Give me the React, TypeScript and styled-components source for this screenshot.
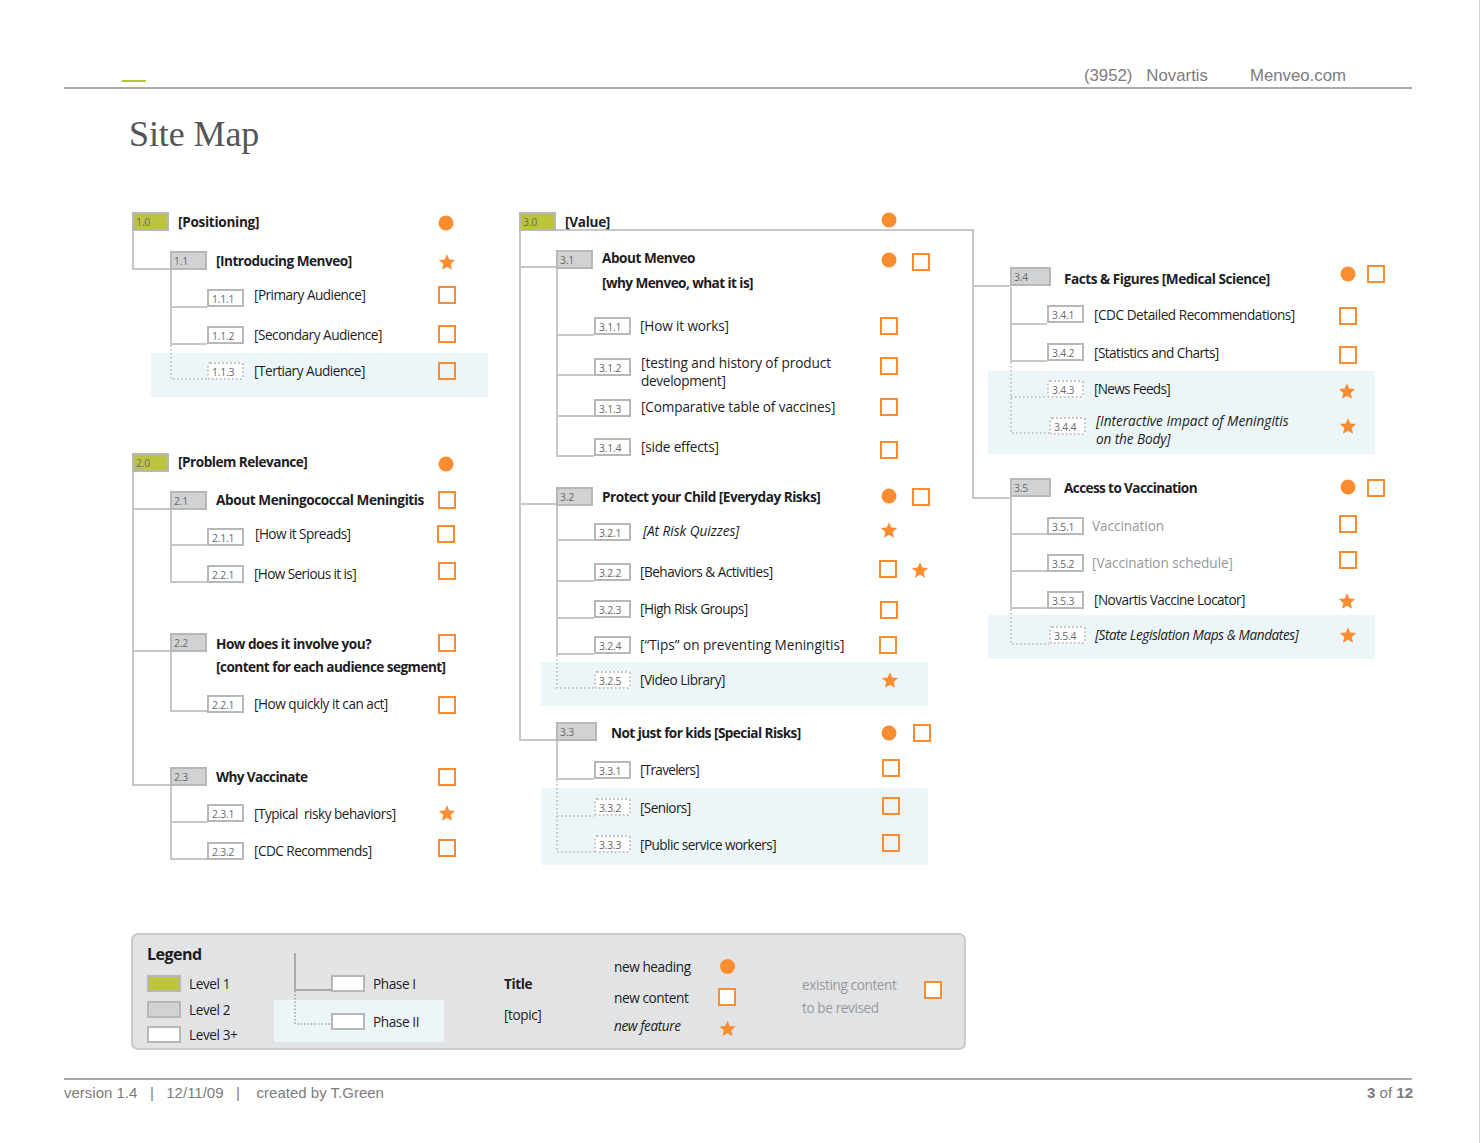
import React from "react";
import styled, { createGlobalStyle } from "styled-components";

const TOP = 200;
const ORANGE = "#fb8d31";
const LINE = "#c6c7c9";
const BODY_FONT = `"Open Sans", "Noto Sans", sans-serif`;

const Global = createGlobalStyle`
  html, body { margin: 0; padding: 0; background: #fff; }
  * { box-sizing: border-box; }
`;

const Page = styled.div`
  position: relative;
  width: 1480px;
  height: 1143px;
  overflow: hidden;
  background: #fff;
  font-family: ${BODY_FONT};
  color: #1d1d1f;
  border-right: 1px solid #d4d4d4;
`;

const TopBar = styled.header`
  display: flex;
  align-items: flex-end;
  height: 89px;
  margin: 0 67px 0 64px;
  border-bottom: 2px solid #a9a9a9;
  font-family: "Liberation Sans", Arial, sans-serif;
  font-size: 16.8px;
  color: #7c7c7e;
`;
const GreenDash = styled.span`
  width: 24px;
  height: 2px;
  margin: 0 0 5px 58px;
  background: #b9c52d;
`;
const TopMeta = styled.div`
  display: flex;
  margin-left: auto;
  padding: 0 66px 1px 0;
  line-height: 20px;
  white-space: pre;
`;
const TopSite = styled.span`
  margin-left: 42px;
`;
const Title = styled.h1`
  margin: 0;
  padding: 23px 0 0 129px;
  height: 111px;
  font: 400 36px/44px "Liberation Serif", "Times New Roman", serif;
  letter-spacing: -0.1px;
  color: #555557;
`;

const Canvas = styled.main`
  position: relative;
  height: 733px;
`;
const Wires = styled.svg`
  position: absolute;
  left: 0;
  top: 0;
  width: 1480px;
  height: 733px;
`;
const Band = styled.div.attrs<{ $x: number; $y: number; $w: number; $h: number }>((p) => ({
  style: { left: p.$x, top: p.$y - TOP, width: p.$w, height: p.$h },
}))<{ $x: number; $y: number; $w: number; $h: number }>`
  position: absolute;
  background: #ecf6f8;
`;

type Lv = 1 | 2 | 3;
const BOX_H: Record<Lv, number> = { 1: 19, 2: 19, 3: 18 };

const NumBox = styled.div.attrs<{ $x: number; $y: number; $lv: Lv; $wide?: boolean }>((p) => ({
  style: {
    left: p.$x,
    top: p.$y - TOP,
    width: p.$wide ? 41 : 37,
    height: BOX_H[p.$lv],
  },
}))<{ $x: number; $y: number; $lv: Lv; $wide?: boolean; $dotted?: boolean }>`
  position: absolute;
  display: flex;
  align-items: center;
  padding: ${(p) => (p.$lv === 3 ? "1px 0 0 3px" : "0 0 0 2px")};
  font-size: 10.4px;
  letter-spacing: -0.2px;
  color: #68686a;
  background: ${(p) => (p.$lv === 1 ? "#bcc43e" : p.$lv === 2 ? "#d1d2d3" : "#fff")};
  border: 2px ${(p) => (p.$dotted ? "dotted" : "solid")} ${(p) => (p.$dotted ? "#c4c5c7" : "#b6b7b9")};
  ${(p) => (p.$dotted ? "border-radius: 3px;" : "")}
`;

const Label = styled.div.attrs<{ $x: number; $y: number; $sp?: number }>((p) => ({
  style: {
    left: p.$x,
    top: p.$y - TOP,
    letterSpacing: p.$sp === undefined ? undefined : `${p.$sp}px`,
  },
}))<{ $x: number; $y: number; $sp?: number; $strong?: boolean; $italic?: boolean; $muted?: boolean }>`
  position: absolute;
  transform: translateY(-50%);
  white-space: pre;
  font-size: 13.6px;
  line-height: 18px;
  letter-spacing: ${(p) => (p.$strong ? "-0.5px" : "-0.48px")};
  font-weight: ${(p) => (p.$strong ? 700 : 400)};
  font-style: ${(p) => (p.$italic ? "italic" : "normal")};
  color: ${(p) => (p.$muted ? "#98999b" : "#1d1d1f")};
`;

const MarkSlot = styled.div.attrs<{ $x: number; $y: number }>((p) => ({
  style: { left: p.$x, top: p.$y - TOP },
}))<{ $x: number; $y: number }>`
  position: absolute;
  display: flex;
  transform: translate(-50%, -50%);
`;
const Square = styled.span`
  display: block;
  width: 18px;
  height: 18px;
  border: 2px solid ${ORANGE};
`;
const WhiteSquare = styled(Square)`
  background: #fff;
`;
const Dot = styled.span`
  display: block;
  width: 15px;
  height: 15px;
  border-radius: 50%;
  background: ${ORANGE};
`;
const StarSvg = styled.svg`
  display: block;
  width: 17px;
  height: 17px;
  fill: ${ORANGE};
`;
const Star = () => (
  <StarSvg viewBox="0 0 24 24">
    <polygon points="12,1 15.2,8.6 23.5,9.3 17.2,14.7 19.1,22.9 12,18.6 4.9,22.9 6.8,14.7 0.5,9.3 8.8,8.6" />
  </StarSvg>
);
type MK = "s" | "d" | "t";
const Mark = ({ k }: { k: MK }) => (k === "s" ? <Square /> : k === "d" ? <Dot /> : <Star />);

type NodeT = { n: string; lv: Lv; x: number; y: number; dotted?: boolean; wide?: boolean };
const nodes: NodeT[] = [
  { n: "1.0", lv: 1, x: 132, y: 212 },
  { n: "1.1", lv: 2, x: 170, y: 251 },
  { n: "1.1.1", lv: 3, x: 207, y: 289 },
  { n: "1.1.2", lv: 3, x: 207, y: 326 },
  { n: "1.1.3", lv: 3, x: 207, y: 362, dotted: true },
  { n: "2.0", lv: 1, x: 132, y: 453 },
  { n: "2.1", lv: 2, x: 170, y: 491 },
  { n: "2.1.1", lv: 3, x: 207, y: 528 },
  { n: "2.2.1", lv: 3, x: 207, y: 565 },
  { n: "2.2", lv: 2, x: 170, y: 633 },
  { n: "2.2.1", lv: 3, x: 207, y: 695 },
  { n: "2.3", lv: 2, x: 170, y: 767 },
  { n: "2.3.1", lv: 3, x: 207, y: 804 },
  { n: "2.3.2", lv: 3, x: 207, y: 842 },
  { n: "3.0", lv: 1, x: 519, y: 212 },
  { n: "3.1", lv: 2, x: 556, y: 250 },
  { n: "3.1.1", lv: 3, x: 594, y: 317 },
  { n: "3.1.2", lv: 3, x: 594, y: 358 },
  { n: "3.1.3", lv: 3, x: 594, y: 399 },
  { n: "3.1.4", lv: 3, x: 594, y: 438 },
  { n: "3.2", lv: 2, x: 556, y: 487 },
  { n: "3.2.1", lv: 3, x: 594, y: 523 },
  { n: "3.2.2", lv: 3, x: 594, y: 563 },
  { n: "3.2.3", lv: 3, x: 594, y: 600 },
  { n: "3.2.4", lv: 3, x: 594, y: 636 },
  { n: "3.2.5", lv: 3, x: 594, y: 671, dotted: true },
  { n: "3.3", lv: 2, x: 556, y: 722, wide: true },
  { n: "3.3.1", lv: 3, x: 594, y: 761 },
  { n: "3.3.2", lv: 3, x: 594, y: 798, dotted: true },
  { n: "3.3.3", lv: 3, x: 594, y: 835, dotted: true },
  { n: "3.4", lv: 2, x: 1010, y: 267, wide: true },
  { n: "3.4.1", lv: 3, x: 1047, y: 305 },
  { n: "3.4.2", lv: 3, x: 1047, y: 343 },
  { n: "3.4.3", lv: 3, x: 1047, y: 380, dotted: true },
  { n: "3.4.4", lv: 3, x: 1049, y: 417, dotted: true },
  { n: "3.5", lv: 2, x: 1010, y: 478, wide: true },
  { n: "3.5.1", lv: 3, x: 1047, y: 517 },
  { n: "3.5.2", lv: 3, x: 1047, y: 554 },
  { n: "3.5.3", lv: 3, x: 1047, y: 591 },
  { n: "3.5.4", lv: 3, x: 1049, y: 626, dotted: true },
];

type Lab = { t: string; x: number; y: number; s?: boolean; i?: boolean; m?: boolean; sp?: number };
const labels: Lab[] = [
  { t: "[Positioning]", x: 178, y: 222, s: true, sp: -0.3 },
  { t: "[Introducing Menveo]", x: 216, y: 261, s: true },
  { t: "[Primary Audience]", x: 254, y: 295, sp: -0.53 },
  { t: "[Secondary Audience]", x: 254, y: 335 },
  { t: "[Tertiary Audience]", x: 254, y: 371 },
  { t: "[Problem Relevance]", x: 178, y: 462, s: true },
  { t: "About Meningococcal Meningitis", x: 216, y: 500, s: true, sp: -0.42 },
  { t: "[How it Spreads]", x: 255, y: 534, sp: -0.55 },
  { t: "[How Serious it is]", x: 254, y: 574, sp: -0.6 },
  { t: "How does it involve you?", x: 216, y: 644, s: true },
  { t: "[content for each audience segment]", x: 216, y: 667, s: true, sp: -0.55 },
  { t: "[How quickly it can act]", x: 254, y: 704 },
  { t: "Why Vaccinate", x: 216, y: 777, s: true, sp: -0.62 },
  { t: "[Typical  risky behaviors]", x: 254, y: 814, sp: -0.5 },
  { t: "[CDC Recommends]", x: 254, y: 851, sp: -0.53 },
  { t: "[Value]", x: 565, y: 222, s: true, sp: -0.3 },
  { t: "About Menveo", x: 602, y: 258, s: true, sp: -0.48 },
  { t: "[why Menveo, what it is]", x: 602, y: 283, s: true, sp: -0.58 },
  { t: "[How it works]", x: 640, y: 326, sp: -0.14 },
  { t: "[testing and history of product", x: 641, y: 363, sp: -0.07 },
  { t: "development]", x: 641, y: 381, sp: -0.3 },
  { t: "[Comparative table of vaccines]", x: 641, y: 407, sp: -0.13 },
  { t: "[side effects]", x: 641, y: 447, sp: -0.2 },
  { t: "Protect your Child [Everyday Risks]", x: 602, y: 497, s: true },
  { t: "[At Risk Quizzes]", x: 643, y: 531, i: true, sp: -0.02 },
  { t: "[Behaviors & Activities]", x: 640, y: 572, sp: -0.5 },
  { t: "[High Risk Groups]", x: 640, y: 609, sp: -0.54 },
  { t: "[“Tips” on preventing Meningitis]", x: 640, y: 645, sp: -0.02 },
  { t: "[Video Library]", x: 640, y: 680, sp: -0.5 },
  { t: "Not just for kids [Special Risks]", x: 611, y: 733, s: true, sp: -0.56 },
  { t: "[Travelers]", x: 640, y: 770, sp: -0.72 },
  { t: "[Seniors]", x: 640, y: 808, sp: -0.6 },
  { t: "[Public service workers]", x: 640, y: 845, sp: -0.55 },
  { t: "Facts & Figures [Medical Science]", x: 1064, y: 279, s: true, sp: -0.47 },
  { t: "[CDC Detailed Recommendations]", x: 1094, y: 315, sp: -0.46 },
  { t: "[Statistics and Charts]", x: 1094, y: 353, sp: -0.55 },
  { t: "[News Feeds]", x: 1094, y: 389, sp: -0.7 },
  { t: "[Interactive Impact of Meningitis", x: 1096, y: 421, i: true, sp: 0 },
  { t: "on the Body]", x: 1096, y: 439, i: true, sp: -0.1 },
  { t: "Access to Vaccination", x: 1064, y: 488, s: true, sp: -0.62 },
  { t: "Vaccination", x: 1092, y: 526, m: true, sp: -0.06 },
  { t: "[Vaccination schedule]", x: 1092, y: 563, m: true, sp: -0.04 },
  { t: "[Novartis Vaccine Locator]", x: 1094, y: 600, sp: -0.54 },
  { t: "[State Legislation Maps & Mandates]", x: 1095, y: 635, i: true, sp: -0.42 },
];

const marks: [MK, number, number][] = [
  ["d", 446, 223], ["t", 447, 262], ["s", 447, 295], ["s", 447, 334], ["s", 447, 371],
  ["d", 446, 464], ["s", 447, 500], ["s", 446, 534], ["s", 447, 571], ["s", 447, 643],
  ["s", 447, 705], ["s", 447, 777], ["t", 447, 813], ["s", 447, 848],
  ["d", 889, 220], ["d", 889, 260], ["s", 921, 262], ["s", 889, 326], ["s", 889, 366],
  ["s", 889, 407], ["s", 889, 450], ["d", 889, 496], ["s", 921, 497], ["t", 889, 530],
  ["s", 888, 569], ["t", 920, 570], ["s", 889, 610], ["s", 888, 645], ["t", 890, 680],
  ["d", 889, 733], ["s", 922, 733], ["s", 891, 768], ["s", 891, 806], ["s", 891, 843],
  ["d", 1348, 274], ["s", 1376, 274], ["s", 1348, 316], ["s", 1348, 355], ["t", 1347, 391],
  ["t", 1348, 426], ["d", 1348, 487], ["s", 1376, 488], ["s", 1348, 524], ["s", 1348, 560],
  ["t", 1347, 601], ["t", 1348, 635],
];

const bands: [number, number, number, number][] = [
  [151, 353, 337, 44],
  [541, 662, 387, 44],
  [541, 788, 387, 77],
  [988, 371, 387, 83],
  [988, 615, 387, 44],
];

const solid = [
  "M133 231V269H170",
  "M171 270V307H207",
  "M171 307V344H207",
  "M133 472V785H170",
  "M133 509H170",
  "M133 651H170",
  "M171 510V545H207",
  "M171 545V582H207",
  "M171 652V711H207",
  "M171 786V822H207",
  "M171 822V859H207",
  "M520 230V740H556",
  "M520 267H556",
  "M520 504H556",
  "M556 230H973V498H1010",
  "M973 286H1010",
  "M557 268V456H594",
  "M557 335H594",
  "M557 375H594",
  "M557 416H594",
  "M557 505V654H594",
  "M557 540H594",
  "M557 581H594",
  "M557 618H594",
  "M557 741V779H594",
  "M1011 287V361H1047",
  "M1011 324H1047",
  "M1011 497V608H1047",
  "M1011 534H1047",
  "M1011 571H1047",
];
const dotted = [
  "M171 345V379H207",
  "M557 655V688H594",
  "M557 780V852H594",
  "M557 816H594",
  "M1011 362V433H1049",
  "M1011 397H1047",
  "M1011 609V644H1049",
];

const LegendPanel = styled.section`
  display: flex;
  width: 835px;
  height: 117px;
  margin-left: 131px;
  background: #e2e3e5;
  border: 2px solid #c9cacb;
  border-radius: 7px;
  font-size: 13.6px;
  letter-spacing: -0.4px;
`;
const LevelCol = styled.div`
  width: 127px;
  margin-left: 14px;
  padding-top: 9px;
`;
const LegendHead = styled.div`
  margin-bottom: 7px;
  font-size: 16px;
  font-weight: 700;
  line-height: 20px;
  letter-spacing: -0.5px;
`;
const LevelRow = styled.div`
  display: flex;
  align-items: center;
  gap: 8px;
  height: 25.5px;
`;
const Swatch = styled.span<{ $fill: string }>`
  width: 34px;
  height: 17px;
  background: ${(p) => p.$fill};
  border: 2px solid #b6b7b9;
`;
const PhaseCol = styled.div`
  position: relative;
  width: 170px;
  padding-top: 40px;
`;
const PhaseWires = styled.svg`
  position: absolute;
  left: 0;
  top: 0;
  width: 80px;
  height: 110px;
`;
const PhaseRow = styled.div`
  display: flex;
  align-items: center;
  gap: 8px;
  height: 17px;
  padding-left: 57px;
`;
const PhaseBand = styled(PhaseRow)`
  height: 42px;
  margin-top: 8px;
  background: #ecf6f8;
`;
const TopicCol = styled.div`
  display: flex;
  flex-direction: column;
  gap: 13px;
  width: 110px;
  margin-left: 60px;
  padding-top: 40px;
  line-height: 18px;
`;
const TopicHead = styled.strong`
  font-weight: 700;
`;
const FeatureCol = styled.div`
  display: grid;
  grid-template-columns: 103px 20px;
  grid-template-rows: 31px 28px 18px;
  width: 188px;
  padding-top: 23px;
  line-height: 18px;
`;
const FeatureMark = styled.span<{ $drop: number }>`
  display: flex;
  justify-content: center;
  align-items: flex-start;
  margin-top: ${(p) => p.$drop}px;
`;
const FeatureName = styled.span<{ $italic?: boolean }>`
  font-style: ${(p) => (p.$italic ? "italic" : "normal")};
`;
const ExistCol = styled.div`
  display: flex;
  gap: 28px;
  padding-top: 38px;
  color: #98999b;
  line-height: 23px;
`;
const ExistMark = styled.div`
  margin-top: 8px;
`;

const Footer = styled.footer`
  display: flex;
  justify-content: space-between;
  margin: 28px 67px 0 64px;
  padding-top: 4px;
  border-top: 2px solid #a9a9a9;
  font-family: "Liberation Sans", Arial, sans-serif;
  font-size: 15px;
  line-height: 18px;
  color: #7c7c7e;
  white-space: pre;
`;
const FootPage = styled.span`
  margin-right: -1px;
`;
const FootStrong = styled.b`
  font-weight: 700;
`;

export default function App() {
  return (
    <Page>
      <Global />
      <TopBar>
        <GreenDash />
        <TopMeta>
          <span>(3952)   Novartis</span>
          <TopSite>Menveo.com</TopSite>
        </TopMeta>
      </TopBar>
      <Title>Site Map</Title>
      <Canvas>
        {bands.map(([x, y, w, h]) => (
          <Band key={`${x}-${y}`} $x={x} $y={y} $w={w} $h={h} />
        ))}
        <Wires viewBox={`0 ${TOP} 1480 733`} fill="none">
          {solid.map((d) => (
            <path key={d} d={d} stroke={LINE} strokeWidth="2" />
          ))}
          {dotted.map((d) => (
            <path key={d} d={d} stroke="#b4b5b7" strokeWidth="1.5" strokeDasharray="1.5 2.5" />
          ))}
        </Wires>
        {nodes.map((n) => (
          <NumBox key={`${n.n}-${n.y}`} $x={n.x} $y={n.y} $lv={n.lv} $wide={n.wide} $dotted={n.dotted}>
            {n.n}
          </NumBox>
        ))}
        {labels.map((l) => (
          <Label key={l.t} $x={l.x} $y={l.y} $sp={l.sp} $strong={l.s} $italic={l.i} $muted={l.m}>
            {l.t}
          </Label>
        ))}
        {marks.map(([k, x, y]) => (
          <MarkSlot key={`${k}${x}-${y}`} $x={x} $y={y}>
            <Mark k={k} />
          </MarkSlot>
        ))}
      </Canvas>
      <LegendPanel>
        <LevelCol>
          <LegendHead>Legend</LegendHead>
          <LevelRow><Swatch $fill="#bcc43e" />Level 1</LevelRow>
          <LevelRow><Swatch $fill="#d1d2d3" />Level 2</LevelRow>
          <LevelRow><Swatch $fill="#fff" />Level 3+</LevelRow>
        </LevelCol>
        <PhaseCol>
          <PhaseRow><Swatch $fill="#fff" />Phase I</PhaseRow>
          <PhaseBand><Swatch $fill="#fff" />Phase II</PhaseBand>
          <PhaseWires viewBox="0 0 80 110" fill="none">
            <path d="M21 18V55H57" stroke="#a9aaac" strokeWidth="2" />
            <path d="M21 56V89H57" stroke="#a0a1a3" strokeWidth="1.5" strokeDasharray="1.5 2" />
          </PhaseWires>
        </PhaseCol>
        <TopicCol>
          <TopicHead>Title</TopicHead>
          <span>[topic]</span>
        </TopicCol>
        <FeatureCol>
          <FeatureName>new heading</FeatureName>
          <FeatureMark $drop={1}><Dot /></FeatureMark>
          <FeatureName>new content</FeatureName>
          <FeatureMark $drop={-1}><WhiteSquare /></FeatureMark>
          <FeatureName $italic>new feature</FeatureName>
          <FeatureMark $drop={3}><Star /></FeatureMark>
        </FeatureCol>
        <ExistCol>
          <div>existing content<br />to be revised</div>
          <ExistMark><WhiteSquare /></ExistMark>
        </ExistCol>
      </LegendPanel>
      <Footer>
        <span>version 1.4   |   12/11/09   |    created by T.Green</span>
        <FootPage><FootStrong>3</FootStrong> of <FootStrong>12</FootStrong></FootPage>
      </Footer>
    </Page>
  );
}
